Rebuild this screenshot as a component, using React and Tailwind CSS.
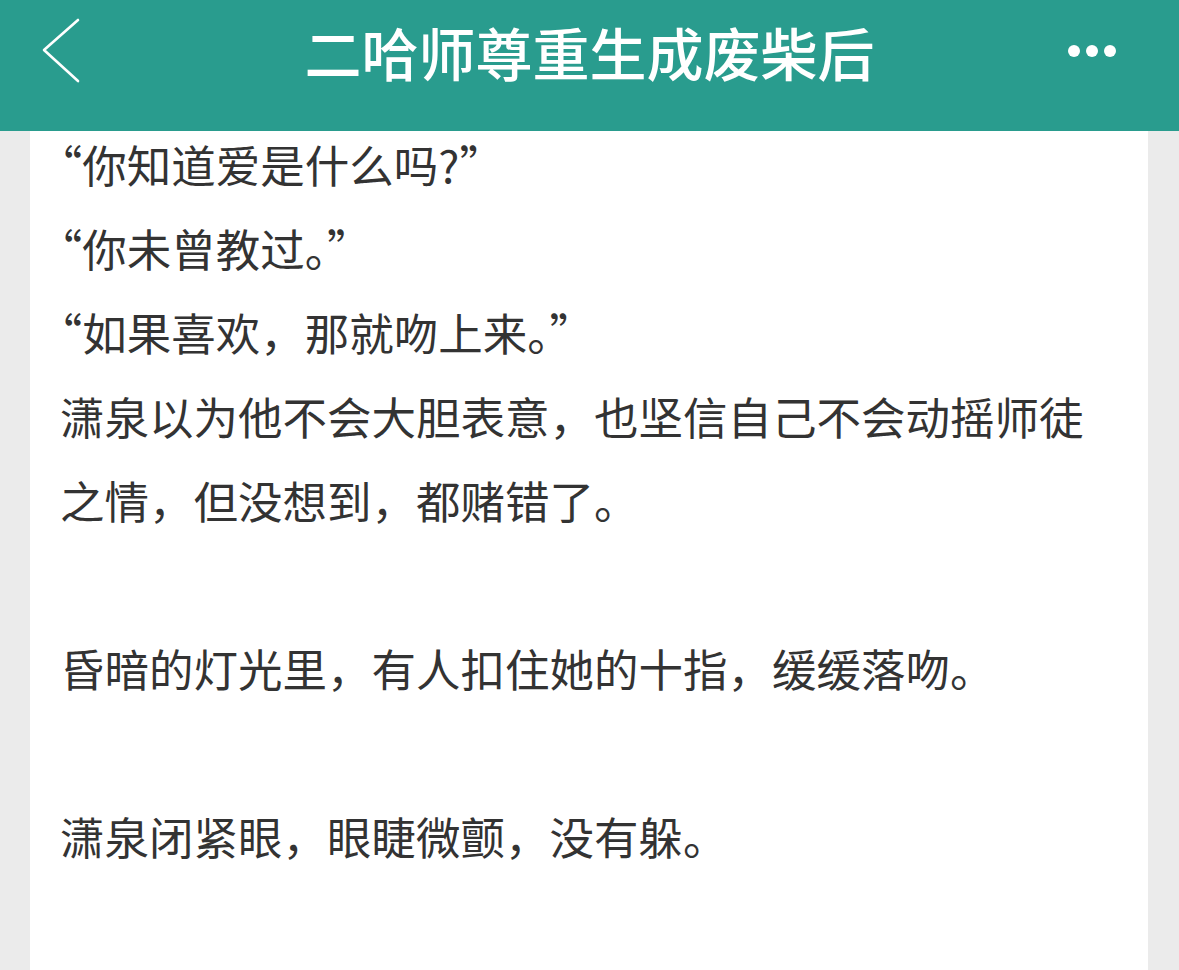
const TITLE = "二哈师尊重生成废柴后";

// paragraphs of the chapter, empty strings are blank lines
const PARAGRAPHS = [
  "“你知道爱是什么吗?”",
  "“你未曾教过。”",
  "“如果喜欢，那就吻上来。”",
  "潇泉以为他不会大胆表意，也坚信自己不会动摇师徒之情，但没想到，都赌错了。",
  "",
  "昏暗的灯光里，有人扣住她的十指，缓缓落吻。",
  "",
  "潇泉闭紧眼，眼睫微颤，没有躲。",
  "",
];

function BackIcon() {
  return (
    <svg width="40" height="66" viewBox="0 0 40 66" fill="none">
      <polyline points="36,2 2,32 36,63" stroke="white" strokeWidth="2.6" strokeLinecap="round" strokeLinejoin="round" />
    </svg>
  );
}

function MoreIcon() {
  return (
    <svg width="48" height="14" viewBox="0 0 48 14">
      <circle cx="6" cy="7" r="6" fill="white" />
      <circle cx="24" cy="7" r="6" fill="white" />
      <circle cx="42" cy="7" r="6" fill="white" />
    </svg>
  );
}

// curly quotes get half-width glyphs, the rest stays full-width
function Line({ text }) {
  return (
    <p>
      {text.split(/([“”])/).map((part, i) =>
        part === "“" || part === "”" ? (
          <span key={i} className="[font-feature-settings:'halt']">{part}</span>
        ) : (
          part
        )
      )}
    </p>
  );
}

export default function App() {
  return (
    <div
      className="h-[970px] flex flex-col bg-[#ebebeb] overflow-hidden"
      style={{ fontFamily: '"Noto Sans CJK SC", Roboto, sans-serif' }}
    >
      {/* Top bar */}
      <div className="relative z-10 h-[131px] shrink-0 bg-[#299c8e]">
        <div className="h-[102px] grid grid-cols-[1fr_auto_1fr] items-center">
          <div className="pl-[42px] flex items-center">
            <button className="w-[40px] flex items-center" aria-label="Back">
              <BackIcon />
            </button>
          </div>
          <div className="text-white text-[57px] font-medium leading-none">{TITLE}</div>
          <div className="pr-[63px] flex items-center justify-end">
            <button className="w-[48px] flex items-center" aria-label="More">
              <MoreIcon />
            </button>
          </div>
        </div>
      </div>

      {/* Reading page */}
      <div className="flex-1 flex pl-[30px] pr-[31px]">
        <div className="flex-1 bg-white overflow-hidden pl-[30px] pr-[30px]">
          <div lang="zh-CN" className="-mt-[9px] text-[44.5px] leading-[84px] text-[#333333]">
            {PARAGRAPHS.map((p, i) =>
              p ? <Line key={i} text={p} /> : <div key={i} className="h-[84px]" />
            )}
          </div>
        </div>
      </div>
    </div>
  );
}
